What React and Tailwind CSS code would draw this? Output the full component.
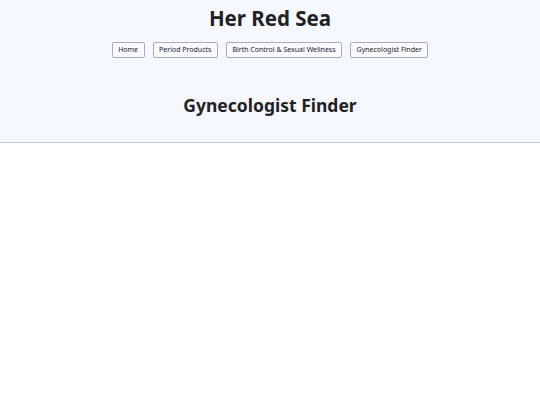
const links = ["Home", "Period Products", "Birth Control & Sexual Wellness", "Gynecologist Finder"];

export default function App() {
  return (
    <div className="min-h-[405px] bg-white font-['Noto_Sans',sans-serif] text-[#222]">
      <header className="bg-[#f5f8fe] border-b border-[#c5c9d6] pb-[24px]">
        <h1 className="text-center text-[20.5px] leading-[32px] font-bold pt-[2px]">Her Red Sea</h1>
        <nav className="mt-2 flex justify-center gap-[8px]">
          {links.map((l) => (
            <button
              key={l}
              className="h-[16px] px-[5.5px] text-[7px] leading-[14px] border border-[#a9adbb] rounded-[2px] bg-[#f8faff] text-[#222]"
            >
              {l}
            </button>
          ))}
        </nav>
        <h2 className="mt-[34px] text-center text-[17.5px] leading-[26px] font-bold">Gynecologist Finder</h2>
      </header>
    </div>
  );
}
